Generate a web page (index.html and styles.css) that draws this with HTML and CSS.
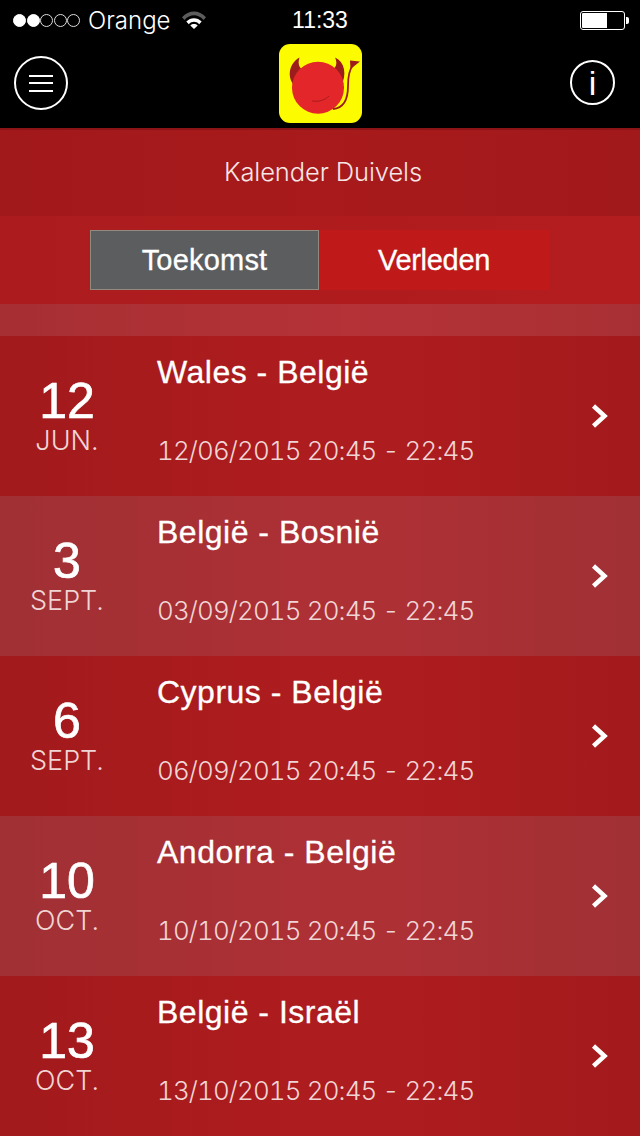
FILE: index.html
```html
<!DOCTYPE html>
<html lang="nl">
<head>
<meta charset="utf-8">
<title>Kalender Duivels</title>
<link rel="stylesheet" href="styles.css">
</head>
<body>
<div class="screen">
  <header class="top">
    <div class="status">
      <div class="status-left">
        <div class="signal"><i class="on"></i><i class="on"></i><i></i><i></i><i></i></div>
        <span class="carrier">Orange</span>
        <svg class="wifi" width="24" height="18" viewBox="0 0 24 18"><path d="M0 6.200C6.800 -1.400 17.200 -1.400 24 6.200L21.500 8.900C16 2.800 8 2.800 2.500 8.900Z" fill="#5c5c5c"/><path d="M4.300 10.600C8.700 6 15.300 6 19.700 10.600L17.200 13.200C14 10 10 10 6.800 13.200Z" fill="#fff"/><path d="M8.300 14.500C10.500 12.600 13.500 12.600 15.700 14.500L12 18Z" fill="#fff"/></svg>
      </div>
      <span class="time">11:33</span>
      <div class="battery"><div class="battery-body"><div class="battery-level"></div></div><div class="battery-tip"></div></div>
    </div>
    <div class="nav">
      <button class="menu-btn" aria-label="Menu"><span></span><span></span><span></span></button>
      <svg class="logo" width="83" height="79" viewBox="0 0 83 79">
        <rect width="83" height="79" rx="11" fill="#fdfb00"/>
        <path d="M16 42C8 35 9 20 20.500 13.500C18 21 21 26 28 28Z" fill="#9c1c1c"/>
        <path d="M50 27C57 25 59 20 56 13.500C66 18 68 31 62 42Z" fill="#9c1c1c"/>
        <circle cx="39" cy="43.700" r="26" fill="#e2262a"/>
        <path d="M33 57C40 58 46 56 50 52" fill="none" stroke="#a81c1c" stroke-width="1"/>
        <path d="M54 65C66 64 69 54 69 42C69 33 70 26 74 21" fill="none" stroke="#9c1c1c" stroke-width="1.800"/>
        <path d="M71.500 25L81 17.500L71 16.500Z" fill="#9c1c1c"/>
      </svg>
      <button class="info-btn" aria-label="Info">i</button>
    </div>
  </header>

  <div class="title-band">Kalender Duivels</div>

  <div class="seg-band">
    <div class="segment">
      <div class="seg seg-active">Toekomst</div>
      <div class="seg seg-other">Verleden</div>
    </div>
  </div>

  <div class="spacer-band"></div>

  <ul class="list">
    <li class="row">
      <div class="date"><span class="day">12</span><span class="month">JUN.</span></div>
      <div class="info"><span class="match">Wales - België</span><span class="when">12/06/2015 20:45 - 22:45</span></div>
      <svg class="chev" width="20" height="26" viewBox="0 0 20 26"><path d="M3.500 3L14.500 13L3.500 23" fill="none" stroke="#fff" stroke-width="4.500"/></svg>
    </li>
    <li class="row alt">
      <div class="date"><span class="day">3</span><span class="month">SEPT.</span></div>
      <div class="info"><span class="match">België - Bosnië</span><span class="when">03/09/2015 20:45 - 22:45</span></div>
      <svg class="chev" width="20" height="26" viewBox="0 0 20 26"><path d="M3.500 3L14.500 13L3.500 23" fill="none" stroke="#fff" stroke-width="4.500"/></svg>
    </li>
    <li class="row">
      <div class="date"><span class="day">6</span><span class="month">SEPT.</span></div>
      <div class="info"><span class="match">Cyprus - België</span><span class="when">06/09/2015 20:45 - 22:45</span></div>
      <svg class="chev" width="20" height="26" viewBox="0 0 20 26"><path d="M3.500 3L14.500 13L3.500 23" fill="none" stroke="#fff" stroke-width="4.500"/></svg>
    </li>
    <li class="row alt">
      <div class="date"><span class="day">10</span><span class="month">OCT.</span></div>
      <div class="info"><span class="match">Andorra - België</span><span class="when">10/10/2015 20:45 - 22:45</span></div>
      <svg class="chev" width="20" height="26" viewBox="0 0 20 26"><path d="M3.500 3L14.500 13L3.500 23" fill="none" stroke="#fff" stroke-width="4.500"/></svg>
    </li>
    <li class="row">
      <div class="date"><span class="day">13</span><span class="month">OCT.</span></div>
      <div class="info"><span class="match">België - Israël</span><span class="when">13/10/2015 20:45 - 22:45</span></div>
      <svg class="chev" width="20" height="26" viewBox="0 0 20 26"><path d="M3.500 3L14.500 13L3.500 23" fill="none" stroke="#fff" stroke-width="4.500"/></svg>
    </li>
  </ul>
</div>
</body>
</html>
```
FILE: styles.css
```css
* { box-sizing: border-box; margin: 0; padding: 0; }
html, body { width: 640px; height: 1136px; overflow: hidden; }
body { background: #a51a1c; color: #fff; font-family: "Liberation Sans", Arial, sans-serif; }
.screen { width: 640px; height: 1136px; overflow: hidden; display: flex; flex-direction: column; }

.top { height: 128px; background: #000; flex: none; }
.status { height: 40px; padding: 0 11px 0 13px; display: flex; align-items: center; justify-content: space-between; position: relative; }
.status-left { display: flex; align-items: center; }
.signal { display: flex; gap: 0.500px; }
.signal i { width: 13px; height: 13px; border-radius: 50%; border: 1px solid #ddd; }
.signal i.on { background: #fff; border-color: #fff; }
.carrier { font-family: "Inter", sans-serif; font-weight: 300; font-size: 24px; margin-left: 8px; }
.wifi { margin-left: 11px; }
.time { font-size: 23px; position: absolute; left: 0; right: 0; text-align: center; font-weight: 400; }
.battery { display: flex; align-items: center; }
.battery-body { width: 45px; height: 19px; border: 1px solid #fff; border-radius: 3px; padding: 1px; }
.battery-level { width: 25px; height: 100%; background: #fff; border-radius: 1px 0 0 1px; }
.battery-tip { width: 3px; height: 7px; background: #fff; margin-left: 1px; border-radius: 0 2px 2px 0; }

.nav { height: 88px; padding: 4px 25px 0 14px; display: flex; align-items: flex-start; justify-content: space-between; }
.menu-btn { width: 54px; height: 54px; margin-top: 12px; border-radius: 50%; border: 2px solid #fff; background: none; display: flex; flex-direction: column; align-items: center; justify-content: center; gap: 5.500px; }
.menu-btn span { width: 24px; height: 2px; background: #fff; }
.logo { display: block; margin-left: 3px; }
.info-btn { width: 45px; height: 45px; margin-top: 16px; border-radius: 50%; border: 2px solid #fff; background: none; color: #fff; font-family: "Liberation Sans", sans-serif; font-size: 34px; line-height: 40px; text-align: center; }

.title-band { height: 88px; flex: none; background: linear-gradient(90deg, #a2191b, #a81a1c 50%, #a2191b); border-top: 2px solid #8c1416; display: flex; align-items: center; justify-content: center; padding: 0 0 3px 6px; font-family: "Inter", sans-serif; font-weight: 300; font-size: 25.500px; letter-spacing: -0.100px; color: #f6e6e6; }
.seg-band { height: 88px; flex: none; background: linear-gradient(90deg, #ac1c1e, #b01c1e 60%, #b41d1f); padding: 14px 0 0 90px; display: flex; }
.segment { display: flex; height: 60px; }
.seg { display: flex; align-items: center; justify-content: center; font-size: 29px; letter-spacing: 0.200px; font-weight: 400; -webkit-text-stroke: 0.3px #fff; }
.seg-active { width: 229px; background: #5b5d5f; border: 1px solid #908a80; }
.seg-other { width: 230px; background: #bf1919; letter-spacing: -0.300px; }
.spacer-band { height: 32px; flex: none; background: linear-gradient(90deg, #a62f33, #b53237 55%, #a83034); }

.list { list-style: none; flex: none; }
.row { height: 160px; display: flex; align-items: stretch; background: linear-gradient(90deg, #a21a1c, #ad1c1e 45%, #ad1c1e 65%, #a31a1c); }
.row.alt { background: linear-gradient(90deg, #a03034, #ad3035 50%, #ad3035 62%, #a03034); }
.date { width: 134px; flex: none; display: flex; flex-direction: column; align-items: center; justify-content: center; padding-top: 2px; }
.day { font-size: 50px; line-height: 47px; font-weight: 400; -webkit-text-stroke: 0.7px #fff; }
.month { font-family: "Inter", sans-serif; font-weight: 300; font-size: 27px; line-height: 32px; color: #f0d5d5; }
.info { flex: 1; display: flex; flex-direction: column; padding: 16px 0 0 23px; }
.match { font-size: 32px; line-height: 40px; letter-spacing: 0.500px; -webkit-text-stroke: 0.3px #fff; }
.when { font-family: "Inter", sans-serif; font-weight: 300; font-size: 26px; font-variant-numeric: tabular-nums; letter-spacing: -0.900px; line-height: 32px; margin-top: 43px; color: #f0d5d5; }
.chev { align-self: center; margin: 0 30px 0 0; }
```
